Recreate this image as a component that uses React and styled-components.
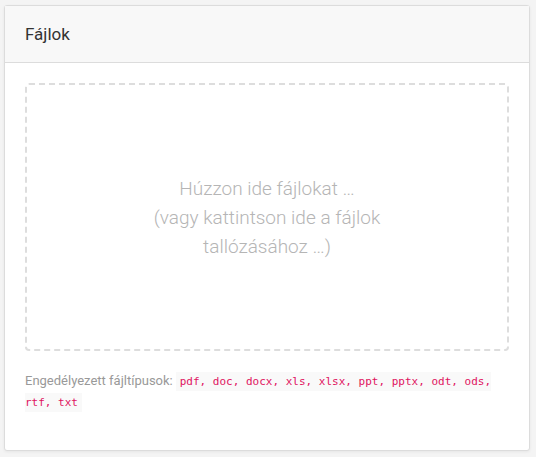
import React from "react";
import styled, { createGlobalStyle } from "styled-components";

const Global = createGlobalStyle`
  html, body { margin: 0; padding: 0; background: #f4f4f4; }
  body { font-family: Roboto, "Open Sans", sans-serif; }
`;

const Page = styled.div`
  padding: 5px 6px 6px 4px;
`;

const Card = styled.div`
  background: #fff;
  border: 1px solid #dcdcdc;
  border-radius: 3px;
  box-shadow: 0 1px 3px rgba(0,0,0,0.06);
  height: 444px;
  display: flex;
  flex-direction: column;
`;

const Header = styled.div`
  background: #f8f8f8;
  border-bottom: 1px solid #dcdcdc;
  height: 56px;
  display: flex;
  align-items: center;
  padding: 0 20px;
  font-size: 17px;
  color: #333;
`;

const Body = styled.div`
  padding: 20px 20px;
`;

const Drop = styled.div`
  border: 2px dashed #dddddd;
  border-radius: 4px;
  height: 264px;
  display: flex;
  align-items: center;
  justify-content: center;
  text-align: center;
  color: #b5b5b5;
  font-size: 19px;
  font-weight: 300;
  line-height: 29px;
`;

const DropText = styled.div`
  width: 270px;
`;

const Allowed = styled.div`
  margin-top: 20px;
  font-size: 13px;
  color: #999;
  line-height: 20px;
`;

const Code = styled.code`
  font-family: "DejaVu Sans Mono", monospace;
  font-size: 11px;
  color: #e0135f;
  background: #f9f9f9;
  padding: 3px 4px;
  margin-left: 3px;
`;

export default function App() {
  return (
    <>
      <Global />
      <Page>
        <Card>
          <Header>Fájlok</Header>
          <Body>
            <Drop>
              <DropText>
                Húzzon ide fájlokat …<br />
                (vagy kattintson ide a fájlok tallózásához …)
              </DropText>
            </Drop>
            <Allowed>
              Engedélyezett fájltípusok:
              <Code>pdf, doc, docx, xls, xlsx, ppt, pptx, odt, ods, rtf, txt</Code>
            </Allowed>
          </Body>
        </Card>
      </Page>
    </>
  );
}
